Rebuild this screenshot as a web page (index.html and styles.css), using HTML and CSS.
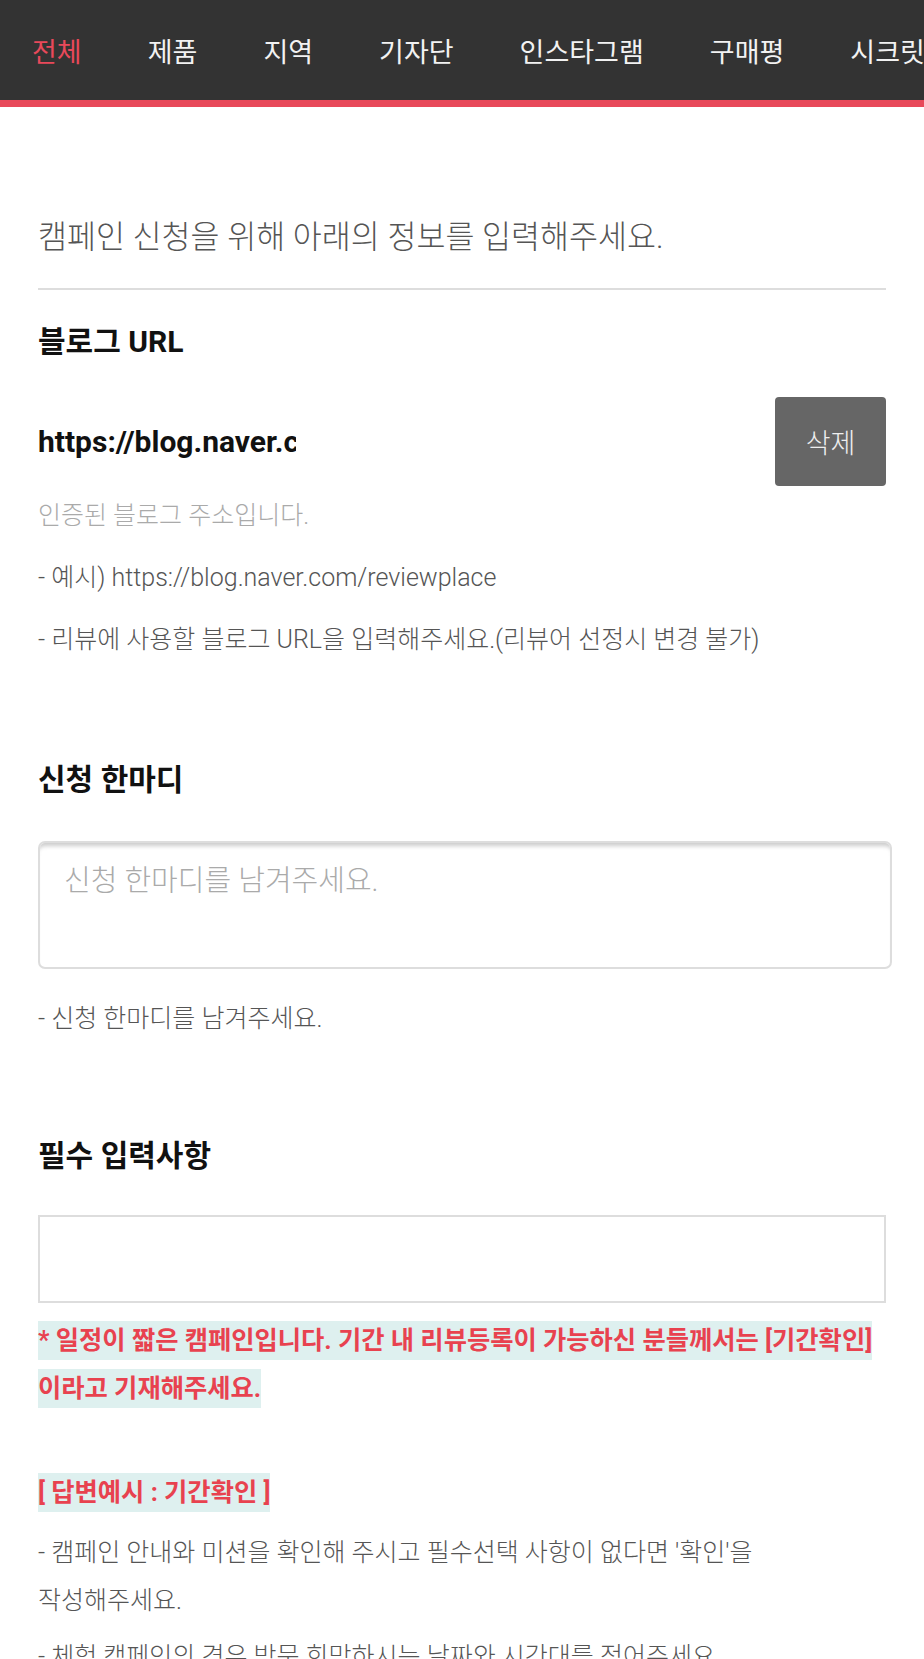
FILE: index.html
```html
<!DOCTYPE html>
<html lang="ko">
<head>
    <meta charset="UTF-8">
    <meta name="viewport" content="width=device-width, initial-scale=1.0">
    <title>캠페인 신청</title>

    <link rel="stylesheet" href="styles.css">
</head>
<body>
    <nav class="tabs">
        <a class="tab active">전체</a>
        <a class="tab">제품</a>
        <a class="tab">지역</a>
        <a class="tab">기자단</a>
        <a class="tab">인스타그램</a>
        <a class="tab">구매평</a>
        <a class="tab">시크릿</a>
    </nav>

    <div class="form">
        <p class="intro">캠페인 신청을 위해 아래의 정보를 입력해주세요.</p>

        <div class="field field_blog">
            <h3 class="label">블로그 URL</h3>
            <div class="url_row">
                <input class="url_input" type="text" value="https://blog.naver.com/reviewplace" readonly>
                <button class="btn_delete">삭제</button>
            </div>
            <p class="verified">인증된 블로그 주소입니다.</p>
            <p class="help">- 예시) https://blog.naver.com/reviewplace</p>
            <p class="help">- 리뷰에 사용할 블로그 URL을 입력해주세요.(리뷰어 선정시 변경 불가)</p>
        </div>

        <div class="field field_comment">
            <h3 class="label">신청 한마디</h3>
            <textarea class="comment" placeholder="신청 한마디를 남겨주세요."></textarea>
            <p class="help">- 신청 한마디를 남겨주세요.</p>
        </div>

        <div class="field field_required">
            <h3 class="label">필수 입력사항</h3>
            <input class="answer" type="text">
            <p class="notice"><span class="mark">* 일정이 짧은 캠페인입니다. 기간 내 리뷰등록이 가능하신 분들께서는 [기간확인] 이라고 기재해주세요.</span></p>
            <p class="notice example"><span class="mark">[ 답변예시 : 기간확인 ]</span></p>
            <p class="help long">- 캠페인 안내와 미션을 확인해 주시고 필수선택 사항이 없다면 '확인'을 작성해주세요.</p>
            <p class="help long">- 체험 캠페인의 경우 방문 희망하시는 날짜와 시간대를 적어주세요.</p>
        </div>
    </div>
</body>
</html>
```

FILE: styles.css
```css
body
{
    margin: 0px;
    background: #fff;
    font-family: Roboto, "Noto Sans CJK KR", sans-serif;
    color: #222;
    word-break: keep-all;
}

p, h3
{
    margin: 0px;
}

.tabs
{
    display: flex;
    gap: 66px;
    height: 100px;
    align-items: center;
    padding: 0 32px;
    background-color: #333333;
    border-bottom: 7px solid #e8495a;
    white-space: nowrap;
    overflow: hidden;
}

.tab
{
    font-size: 27px;
    color: #f2f2f2;
    flex-shrink: 0;
}

.tab.active
{
    color: #e8495a;
}

.form
{
    padding: 110px 38px 0 38px;
}

.intro
{
    font-size: 31.5px;
    line-height: 42px;
    font-weight: 300;
    color: #555;
    padding-bottom: 29px;
    border-bottom: 2px solid #dddddd;
}

.label
{
    font-size: 30px;
    line-height: 40px;
    font-weight: 700;
    color: #111;
}

.field_blog
{
    padding-top: 32px;
}

.url_row
{
    display: flex;
    justify-content: space-between;
    align-items: center;
    margin-top: 35px;
}

.url_input
{
    width: 258px;
    border: none;
    padding: 0px;
    outline: none;
    font-family: inherit;
    font-size: 30px;
    font-weight: 700;
    color: #111;
}

.btn_delete
{
    width: 111px;
    height: 89px;
    border: none;
    border-radius: 4px;
    background-color: #666666;
    color: #eeeeee;
    font-family: inherit;
    font-size: 27px;
    font-weight: 300;
}

.verified
{
    margin-top: 10px;
    font-size: 25px;
    line-height: 40px;
    font-weight: 300;
    color: #aaaaaa;
}

.help
{
    margin-top: 22px;
    font-size: 25px;
    line-height: 40px;
    font-weight: 300;
    color: #555;
}

.field_comment
{
    padding-top: 100px;
}

.comment
{
    display: block;
    box-sizing: border-box;
    width: calc(100% + 6px);
    height: 128px;
    margin-top: 41px;
    padding: 18px 24px;
    border: 2px solid #dddddd;
    border-radius: 7px;
    box-shadow: inset 0 6px 4px -3px #cccccc;
    resize: none;
    font-family: inherit;
    font-size: 29px;
    font-weight: 300;
    line-height: 40px;
}

.comment::placeholder
{
    color: #aaaaaa;
}

.field_comment .help
{
    margin-top: 30px;
}

.field_required
{
    padding-top: 97px;
}

.answer
{
    display: block;
    box-sizing: border-box;
    width: 100%;
    height: 88px;
    margin-top: 39px;
    border: 2px solid #dddddd;
}

.notice
{
    margin-top: 14px;
    font-size: 25.3px;
    line-height: 48px;
    font-weight: 700;
    color: #e8424f;
}

.mark
{
    background-color: #def0ef;
    padding: 5px 0;
}

.notice.example
{
    margin-top: 56px;
}

.help.long
{
    margin-top: 12px;
    line-height: 48px;
}

.help.long + .help.long
{
    margin-top: 8px;
}
```
